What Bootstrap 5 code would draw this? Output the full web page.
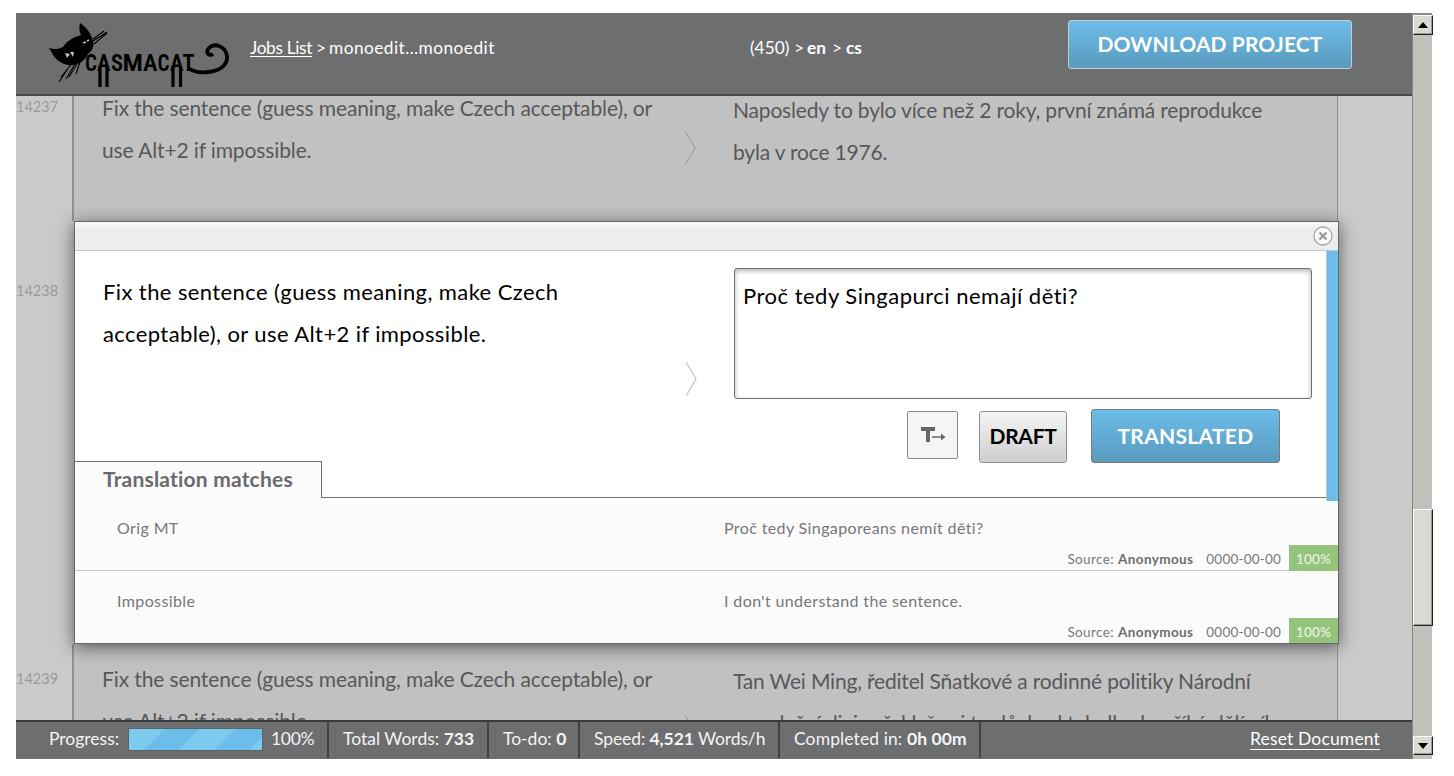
<!DOCTYPE html>
<html lang="en">
<head>
<meta charset="utf-8">
<title>CASMACAT</title>
<link href="https://cdn.jsdelivr.net/npm/bootstrap@5.3.0/dist/css/bootstrap.min.css" rel="stylesheet">
<script src="https://cdn.jsdelivr.net/npm/bootstrap@5.3.0/dist/js/bootstrap.bundle.min.js"></script>
<style>
body{font-family:Lato,"Open Sans",sans-serif;background:#fff;overflow:hidden;padding:13px 22px 0 16px;line-height:1;font-variant-ligatures:none}
.app-window{width:1417px;height:746px}
.page-area{width:1396px}
.topbar{height:83px;background:#6d6e70;border-bottom:2px solid #4c4c4e;color:#fff;font-size:17.3px;z-index:3}
.logo-word{font-family:Roboto,sans-serif;font-stretch:75%;font-weight:600;font-size:23px}
.crumbs{display:grid;grid-template-columns:66px 13px 421px 44px 13px 25px 14px 40px;margin-left:4px;height:70px;align-items:center}
.crumbs span,.crumbs a,.crumbs b{white-space:nowrap}
.crumbs a{letter-spacing:-.34px}
.crumbs .job-name{letter-spacing:.45px}
.ul-link{color:#fff;text-decoration:none;border-bottom:1.5px solid #fff;justify-self:start}
.btn-blue{background:linear-gradient(#6cbdea,#5a9abd);border:1.3px solid #777b7f;border-radius:3px;color:#fff;font-weight:700;font-size:21px;padding:0 0 2px}
.btn-dl{width:284px;height:49px;border:1.5px solid #c6cbd0;margin:7px 60px 0 0;letter-spacing:.1px}
.segments{height:624px;background:#cacaca;overflow:hidden}
.seg-id{width:56px;color:#9b9b9b;font-size:14.5px;flex:none}
.seg-body{width:1266px;background:#c1c1c1;border:solid #929292;border-width:0 1.5px 0 2px;color:#58585a;font-size:21px;line-height:42px;white-space:nowrap;letter-spacing:-.12px}
.seg-src{width:583px;padding-left:28px;flex:none}
.seg-arrow{width:76px;flex:none}
.seg-trg{letter-spacing:-.18px}
.seg-first{height:125px}.seg-first .seg-src{margin-top:-9px}.seg-first .seg-trg{margin-top:-7px}
.editor{width:1265px;height:423px;margin-left:2px;background:#fff;border:1px solid #66676a;box-shadow:0 3px 16px rgba(0,0,0,.55);z-index:2;color:#000}
.editor-bar{height:29px;background:linear-gradient(#f6f8f9,#ededed 30%);border-bottom:1px solid #c6c6c6;padding:4px 5px 0 0}
.work{height:247px}
.work .seg-src{font-size:22px;line-height:42px;padding:20px 0 0 28px;white-space:nowrap;letter-spacing:.4px}
.target-box{width:578px;height:131px;border:1.5px solid #717171;border-radius:3px;box-shadow:inset 0 2px 5px rgba(0,0,0,.3);font-size:22px;letter-spacing:.5px;line-height:42px;padding:6px 0 0 8px;margin-top:17px;white-space:nowrap}
.status-strip{width:12px;height:250px;background:#6cbdea;border-left:1px solid #c8c8c8;right:0;top:29px;z-index:1}
.btn-t{width:51px;height:48px;background:#f5f5f6;border:1px solid #8b8b8d;border-radius:2px;margin-top:2px}
.btn-draft{width:88px;height:52px;background:linear-gradient(#f5f5f5,#cdced0);border:1.3px solid #8d8e90;border-radius:3px;font-weight:700;font-size:21px;margin-top:2px;color:#000;padding:0 0 3px;letter-spacing:-.3px}
.btn-done{width:189px;height:54px;letter-spacing:.3px}
.tabline{height:37px;margin-top:-37px}
.tab-on{width:247px;background:#fbfbfb;border:solid #737375;border-width:1.5px 1.5px 0 0;color:#6a6a6c;font-weight:700;font-size:21px;padding:6px 0 0 28px;white-space:nowrap;letter-spacing:.2px}
.tab-rest{border-bottom:1.5px solid #737375}
.match{height:73px;background:#fbfbfb;color:#77777a;font-size:16px;border-bottom:1px solid #c9c9c9;letter-spacing:.38px}
.match-text{height:47px;padding-top:22px}
.match-src{width:607px;padding-left:42px;margin-right:42px;flex:none}
.meta{height:26px;font-size:13.5px}
.meta>span,.meta>b{padding-top:4px}
.meta b{margin:0 13px 0 4px;color:#6d6d70}
.meta .date{letter-spacing:.2px;margin-right:8px}
.pct{width:49px;height:26px;background:#94c47b;color:#f2f7ee;padding-top:4px;letter-spacing:.15px}
.match-last{height:72px}.match-last .pct{height:25px}.match-last .meta{height:25px}
.statusbar{height:39px;background:#6d6e70;border-top:2px solid #3b3b3d;color:#f4f4f4;font-size:17.5px;z-index:3;white-space:nowrap}
.cell{height:36px;border-right:2px solid #424244;padding:0 0 2px 14px}
.bar{width:135px;height:23px;margin-top:1px;border:1.5px solid #5a6266;background:repeating-linear-gradient(135deg,#7dcaef 0 25px,#6cbdea 25px 50px)}
.sbar{width:20px;background:#c2c1bb;border-left:1px solid #85847d;border-top:2px solid #8a8982}
.sbtn{width:20px;background:#dad9d3;border:1.5px solid;border-color:#f8f8f6 #1e1e1e #1e1e1e #f8f8f6;box-shadow:inset -1px -1px #9b9a94}
</style>
</head>
<body>
<div class="app-window d-flex">
 <div class="page-area d-flex flex-column">
  <header class="topbar d-flex position-relative">
   <svg width="230" height="80" viewBox="16 13 230 80" class="flex-shrink-0">
    <path d="M49 48C54 50 59 49 63 47C66 42 73 37 81 35C79 31 79 27 80 23C86 27 91 33 93 41C95 47 91 52 88 54C85 60 80 64 73 65C64 66 57 61 53 55C52 52 50 50 49 48Z"/>
    <path d="M65 53l5 1-3 4zM70 52l4 0-1 5z" fill="#c4c4c5"/><path d="M83 43l3-1M87 41l2-1" stroke="#b9b9ba" stroke-width="1.400"/>
    <path d="M93 41L107 32M93 39L104 31M94 44L107 33M71 64L59 82M75 64L66 79M80 62L76 74M70 66L61 77M77 64L69 77" fill="none" stroke="#000" stroke-width="1.100"/>
    <g class="logo-word"><text x="85" y="71" textLength="12" lengthAdjust="spacingAndGlyphs">C</text><text x="97" y="71" textLength="13.500" lengthAdjust="spacingAndGlyphs">A</text><text x="111" y="71" textLength="12" lengthAdjust="spacingAndGlyphs">S</text><text x="122.500" y="71" textLength="20.500" lengthAdjust="spacingAndGlyphs">M</text><text x="143" y="71" textLength="14.500" lengthAdjust="spacingAndGlyphs">A</text><text x="157.500" y="71" textLength="12" lengthAdjust="spacingAndGlyphs">C</text><text x="170" y="71" textLength="13.500" lengthAdjust="spacingAndGlyphs">A</text><text x="182.500" y="71" textLength="12" lengthAdjust="spacingAndGlyphs">T</text></g>
    <path d="M100 66V87M107 66V87M173 66V87M180.500 66V87" stroke="#000" stroke-width="3.200"/>
    <path d="M188 68C194 72 201 73 208 72C221 71 228 64 227 56C226 47 215 42 209 48C205 52 209 57 213 54" fill="none" stroke="#000" stroke-width="3.800"/>
   </svg>
   <div class="crumbs"><a class="ul-link">Jobs List</a><span>&gt;</span><span class="job-name">monoedit…monoedit</span><span>(450)</span><span>&gt;</span><b>en</b><span>&gt;</span><b>cs</b></div>
   <button class="btn-blue btn-dl ms-auto">DOWNLOAD PROJECT</button>
  </header>
  <main class="segments">
   <section class="seg-first d-flex">
    <div class="seg-id pt-1">14237</div>
    <div class="seg-body d-flex">
     <div class="seg-src">Fix the sentence (guess meaning, make Czech acceptable), or<br>use Alt+2 if impossible.</div>
     <div class="seg-arrow"><svg width="14" height="38" style="margin:33px 0 0 26px" class="d-block"><path d="M2 2L12 19L2 36" fill="none" stroke="#a2a2a2" stroke-width="1.300"/></svg></div>
     <div class="seg-trg">Naposledy to bylo více než 2 roky, první známá reprodukce<br>byla v roce 1976.</div>
    </div>
   </section>
   <section class="d-flex">
    <div class="seg-id" style="padding-top:63px">14238</div>
    <div class="editor position-relative">
     <div class="editor-bar d-flex justify-content-end"><svg width="20" height="20"><circle cx="10" cy="10" r="9" fill="#fafafa" stroke="#a5a5a6" stroke-width="1.300"/><path d="M6.500 6.500L13.500 13.500M13.500 6.500L6.500 13.500" stroke="#9a9a9b" stroke-width="2.400"/></svg></div>
     <div class="status-strip position-absolute"></div>
     <div class="work d-flex">
      <div class="seg-src">Fix the sentence (guess meaning, make Czech<br>acceptable), or use Alt+2 if impossible.</div>
      <div class="seg-arrow"><svg width="14" height="38" style="margin:109px 0 0 26px" class="d-block"><path d="M2 2L12 19L2 36" fill="none" stroke="#c6c6c6" stroke-width="1.300"/></svg></div>
      <div>
       <div class="target-box">Proč tedy Singapurci nemají děti?</div>
       <div class="d-flex align-items-start" style="margin:10px 0 0 173px">
        <button class="btn-t p-0"><svg width="28" height="18" viewBox="0 0 28 18" class="d-block mx-auto"><path d="M2 1H16V5H11V16H7V5H2Z" fill="#666"/><path d="M13 11H24" stroke="#666" stroke-width="1.500"/><path d="M22 7.500L26.500 11L22 14.500Z" fill="#666"/></svg></button>
        <button class="btn-draft" style="margin-left:21px">DRAFT</button>
        <button class="btn-blue btn-done" style="margin-left:24px">TRANSLATED</button>
       </div>
      </div>
     </div>
     <div class="tabline d-flex"><div class="tab-on">Translation matches</div><div class="tab-rest flex-grow-1"></div></div>
     <div class="match"><div class="match-text d-flex"><div class="match-src">Orig MT</div><div>Proč tedy Singaporeans nemít děti?</div></div>
      <div class="meta d-flex justify-content-end align-items-center"><span>Source:</span><b>Anonymous</b><span class="date">0000-00-00</span><div class="pct d-flex align-items-center justify-content-center">100%</div></div></div>
     <div class="match match-last border-0"><div class="match-text d-flex"><div class="match-src">Impossible</div><div>I don't understand the sentence.</div></div>
      <div class="meta d-flex justify-content-end align-items-center"><span>Source:</span><b>Anonymous</b><span class="date">0000-00-00</span><div class="pct d-flex align-items-center justify-content-center">100%</div></div></div>
    </div>
   </section>
   <section class="d-flex">
    <div class="seg-id" style="padding-top:28px">14239</div>
    <div class="seg-body d-flex" style="padding-top:14px">
     <div class="seg-src">Fix the sentence (guess meaning, make Czech acceptable), or<br>use Alt+2 if impossible.</div>
     <div class="seg-arrow"><svg width="14" height="38" style="margin:55px 0 0 26px" class="d-block"><path d="M2 2L12 19L2 36" fill="none" stroke="#a2a2a2" stroke-width="1.300"/></svg></div>
     <div class="seg-trg" style="padding-top:2px">Tan Wei Ming, ředitel Sňatkové a rodinné politiky Národní<br>populační divize řekl, že si tu důchod tak dlouho, říká dělí víl</div>
    </div>
   </section>
  </main>
  <footer class="statusbar d-flex position-relative">
   <div class="cell d-flex align-items-center" style="width:313px;padding-left:33px"><span style="width:79px">Progress:</span><div class="bar"></div><span class="ms-2" style="letter-spacing:-.3px">100%</span></div>
   <div class="cell d-flex align-items-center" style="width:160px"><span>Total Words: <b>733</b></span></div>
   <div class="cell d-flex align-items-center" style="width:91px"><span>To-do: <b>0</b></span></div>
   <div class="cell d-flex align-items-center" style="width:200px"><span style="letter-spacing:-.1px">Speed: <b>4,521</b> Words/h</span></div>
   <div class="cell d-flex align-items-center" style="width:201px"><span style="letter-spacing:.1px">Completed in: <b>0h 00m</b></span></div>
   <div class="ms-auto" style="padding:8px 32px 0 0"><a class="ul-link" style="letter-spacing:.15px">Reset Document</a></div>
  </footer>
 </div>
 <div class="sbar d-flex flex-column">
  <div class="sbtn d-flex align-items-center justify-content-center" style="height:20px"><svg width="10" height="6"><path d="M0 6L5 0L10 6Z"/></svg></div>
  <div class="sbtn" style="height:117px;margin-top:474px"></div>
  <div class="sbtn mt-auto mb-1 d-flex align-items-center justify-content-center" style="height:19px"><svg width="10" height="6"><path d="M0 0L5 6L10 0Z"/></svg></div>
 </div>
</div>
</body></html>
